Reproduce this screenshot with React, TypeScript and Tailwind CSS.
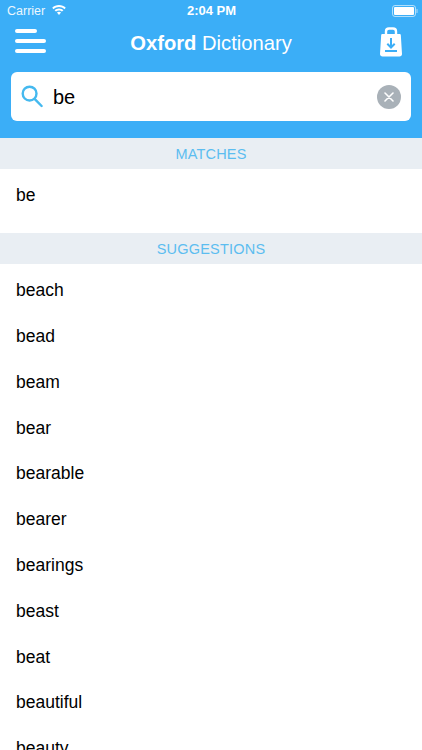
import React from "react";

const words = ["beach","bead","beam","bear","bearable","bearer","bearings","beast","beat","beautiful","beauty"];

function Row({ t, h = "h-[45.8px] pt-[7px]" }: { t: string; h?: string }) {
  return <div className={`${h} flex items-center pl-4 text-[17.5px] text-black shrink-0`}>{t}</div>;
}

function SectionHeader({ t }: { t: string }) {
  return (
    <div className="h-[31px] pt-[2px] shrink-0 bg-[#e9eef3] flex items-center justify-center text-[14.5px] tracking-[0.2px] text-[#5cbdf0]">
      {t}
    </div>
  );
}

export default function App() {
  return (
    <div className="w-[422px] h-[750px] overflow-hidden bg-white flex flex-col font-['Liberation_Sans',sans-serif]">
      <div className="h-[138px] shrink-0 bg-[#3baef7] flex flex-col text-white">
        <div className="h-[21px] relative flex items-center justify-between pl-[7px] pr-[4px] text-[12.5px]">
          <div className="flex items-center gap-[7px]">
            <span className="opacity-90 pt-[1px]">Carrier</span>
            <svg width="14" height="10" viewBox="0 0 14 10" fill="white" className="mb-[1px]">
              <path d="M7 0C4.4 0 2 1 .2 2.8L1.6 4.2C3 2.8 4.9 2 7 2S11 2.8 12.4 4.2L13.8 2.8C12 1 9.6 0 7 0Z" />
              <path d="M7 3.4C5.3 3.4 3.8 4.1 2.6 5.2L4 6.6C4.8 5.9 5.8 5.4 7 5.4S9.2 5.9 10 6.6L11.4 5.2C10.2 4.1 8.7 3.4 7 3.4Z" />
              <path d="M7 6.7C6.2 6.7 5.5 7 5 7.6L7 10L9 7.6C8.5 7 7.8 6.7 7 6.7Z" />
            </svg>
          </div>
          <span className="absolute left-[1px] right-0 text-center text-[13px] font-semibold">2:04 PM</span>
          <svg width="26" height="12" viewBox="0 0 26 12" fill="none">
            <rect x="0.5" y="0.5" width="23" height="11" rx="2.5" stroke="white" strokeOpacity="0.6" />
            <rect x="2" y="2" width="20" height="8" rx="1" fill="white" />
            <rect x="24.5" y="4" width="1" height="4" rx="0.5" fill="white" fillOpacity="0.6" />
          </svg>
        </div>
        <div className="h-[41px] flex items-center justify-between pl-[15px] pr-[19px]">
          <svg width="31" height="25" viewBox="0 0 31 25" fill="white">
            <rect x="0" y="0" width="22" height="4" rx="2" />
            <rect x="0" y="10" width="31" height="4" rx="2" />
            <rect x="0" y="20" width="31" height="4" rx="2" />
          </svg>
          <div className="text-[20.2px] pt-[4px] pr-[3px]">
            <span className="font-bold">Oxford</span> Dictionary
          </div>
          <svg width="24" height="30" viewBox="0 0 24 30">
            <path d="M7 8V4.5C7 2.8 8.2 1.5 10 1.5H14C15.8 1.5 17 2.8 17 4.5V8" fill="none" stroke="white" strokeWidth="2.4" />
            <path d="M3.5 7H20.5C21.2 7 21.7 7.4 21.8 8L23 27C23 28.6 22 29.5 20.5 29.5H3.5C2 29.5 1 28.6 1 27L2.2 8C2.3 7.4 2.8 7 3.5 7Z" fill="white" />
            <path d="M12 11V20M8.3 16.8L12 20.5L15.7 16.8M6 24H18" fill="none" stroke="#3baef7" strokeWidth="2" />
          </svg>
        </div>
        <div className="mt-[10px] mx-[11px] h-[49px] bg-white rounded-[6px] flex items-center pl-[10px] pr-[10px] text-black">
          <svg width="22" height="23" viewBox="0 0 22 23" fill="none" stroke="#45b9ef" strokeWidth="2.4" strokeLinecap="round">
            <circle cx="8.6" cy="8.6" r="6.9" />
            <path d="M13.6 13.8L20.6 21" />
          </svg>
          <span className="ml-[10px] text-[20px] flex-1">be</span>
          <div className="w-[24px] h-[24px] rounded-full bg-[#a9b1b8] flex items-center justify-center">
            <svg width="10" height="10" viewBox="0 0 10 10" stroke="white" strokeWidth="1.6" strokeLinecap="round">
              <path d="M1 1L9 9M9 1L1 9" />
            </svg>
          </div>
        </div>
      </div>
      <SectionHeader t="MATCHES" />
      <Row t="be" h="h-[64px] pb-[12px]" />
      <SectionHeader t="SUGGESTIONS" />
      {words.map((w) => <Row key={w} t={w} />)}
    </div>
  );
}
